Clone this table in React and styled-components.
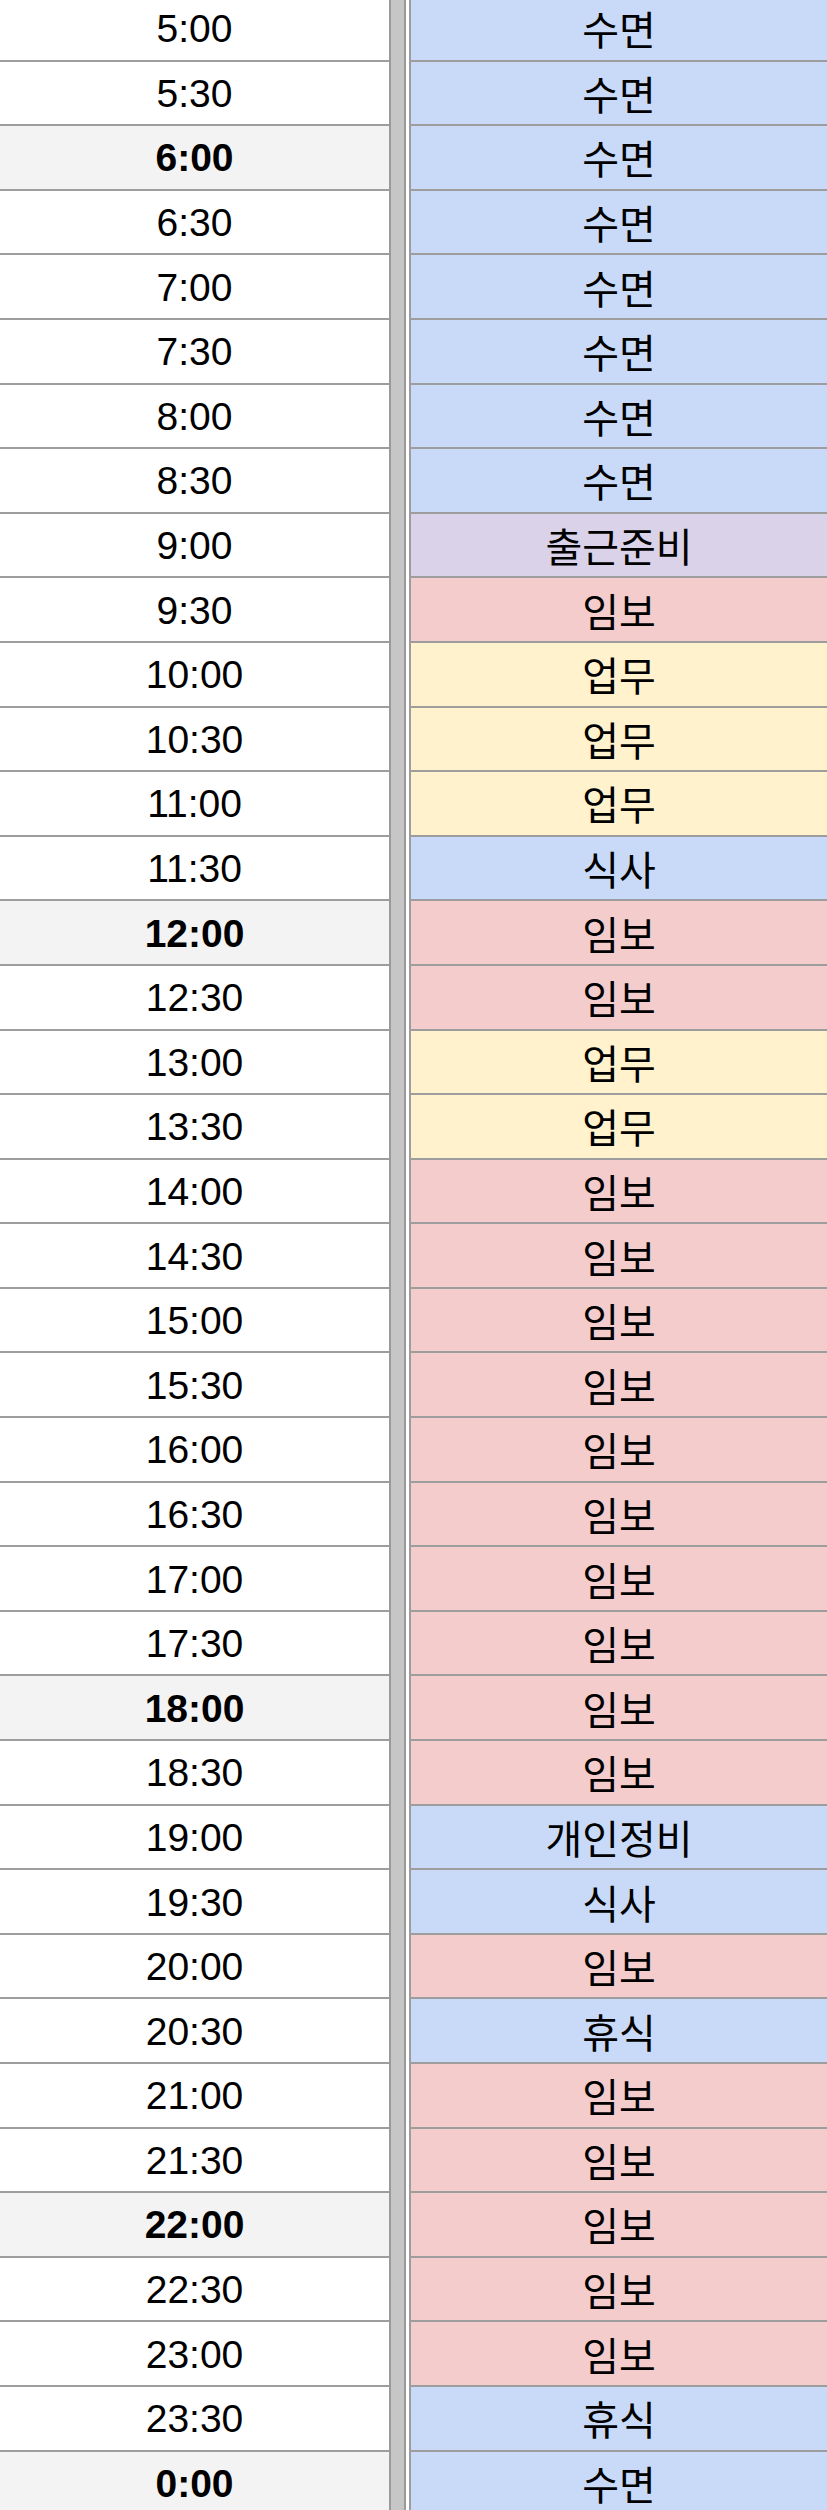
import React from 'react';
import styled, { createGlobalStyle } from 'styled-components';

const GlobalStyle = createGlobalStyle`
  html, body {
    margin: 0;
    padding: 0;
    background: #ffffff;
    overflow: hidden;
  }
`;

const palette = {
  sleep: '#c9daf8',
  rest: '#c9daf8',
  prep: '#d9d2e9',
  foster: '#f4cccc',
  work: '#fff2cc',
};

const schedule = [
  ['5:00', '수면', 'sleep'],
  ['5:30', '수면', 'sleep'],
  ['6:00', '수면', 'sleep'],
  ['6:30', '수면', 'sleep'],
  ['7:00', '수면', 'sleep'],
  ['7:30', '수면', 'sleep'],
  ['8:00', '수면', 'sleep'],
  ['8:30', '수면', 'sleep'],
  ['9:00', '출근준비', 'prep'],
  ['9:30', '임보', 'foster'],
  ['10:00', '업무', 'work'],
  ['10:30', '업무', 'work'],
  ['11:00', '업무', 'work'],
  ['11:30', '식사', 'rest'],
  ['12:00', '임보', 'foster'],
  ['12:30', '임보', 'foster'],
  ['13:00', '업무', 'work'],
  ['13:30', '업무', 'work'],
  ['14:00', '임보', 'foster'],
  ['14:30', '임보', 'foster'],
  ['15:00', '임보', 'foster'],
  ['15:30', '임보', 'foster'],
  ['16:00', '임보', 'foster'],
  ['16:30', '임보', 'foster'],
  ['17:00', '임보', 'foster'],
  ['17:30', '임보', 'foster'],
  ['18:00', '임보', 'foster'],
  ['18:30', '임보', 'foster'],
  ['19:00', '개인정비', 'rest'],
  ['19:30', '식사', 'rest'],
  ['20:00', '임보', 'foster'],
  ['20:30', '휴식', 'rest'],
  ['21:00', '임보', 'foster'],
  ['21:30', '임보', 'foster'],
  ['22:00', '임보', 'foster'],
  ['22:30', '임보', 'foster'],
  ['23:00', '임보', 'foster'],
  ['23:30', '휴식', 'rest'],
  ['0:00', '수면', 'sleep'],
];

// 강조 시간: 굵게 + 회색 배경
const isMarker = (time) => ['0:00', '6:00', '12:00', '18:00', '22:00'].includes(time);

const Sheet = styled.div`
  margin-top: -3px;
  display: flex;
  flex-direction: column;
`;

const Row = styled.div`
  display: flex;
  height: 64.6px;
`;

const TimeCell = styled.div`
  width: 389px;
  box-sizing: border-box;
  display: flex;
  align-items: center;
  justify-content: center;
  border-bottom: 2px solid #9d9d9d;
  background: ${props => props.marker ? '#f3f3f3' : '#ffffff'};
  font-family: "Liberation Sans", Arial, sans-serif;
  font-size: 39px;
  font-weight: ${props => props.marker ? 700 : 400};
  color: #000;
  padding-top: 2px;
`;

const Divider = styled.div`
  width: 13px;
  background: #c6c6c6;
  border-left: 2px solid #9a9a9a;
  border-right: 2px solid #9a9a9a;
  margin-right: 3px;
`;

const ActivityCell = styled.div`
  flex: 1;
  box-sizing: border-box;
  display: flex;
  align-items: center;
  justify-content: center;
  border-left: 2px solid #9d9d9d;
  border-bottom: 2px solid #9d9d9d;
  background: ${props => palette[props.kind]};
  font-family: "Noto Sans CJK KR", "Liberation Sans", sans-serif;
  font-size: 40px;
  color: #000;
`;

function App() {
  return (
    <>
      <GlobalStyle />
      <Sheet>
        {schedule.map(([time, activity, kind]) => (
          <Row key={time}>
            <TimeCell marker={isMarker(time)}>{time}</TimeCell>
            <Divider />
            <ActivityCell kind={kind}>{activity}</ActivityCell>
          </Row>
        ))}
      </Sheet>
    </>
  );
}

export default App;
